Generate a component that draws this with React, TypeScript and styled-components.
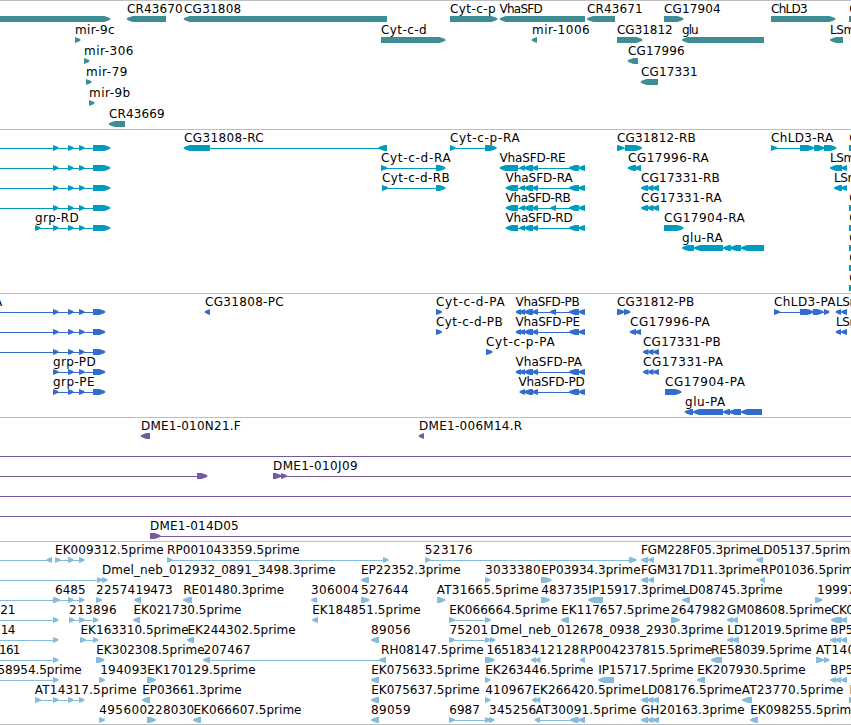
import styled, { createGlobalStyle } from "styled-components";

type Dir = "l" | "r";
type Span = [number, number];

interface Feature {
  // name, left edge and right edge of the label
  label?: [string, number, number];
  dir?: Dir;
  line?: Span;
  blocks?: Span[];
}

interface TrackData {
  name: string;
  color: string;
  rowHeight: number;
  height: number;
  rows: Feature[][];
}

const WIDTH = 851;

const GlobalStyle = createGlobalStyle`
  body {
    margin: 0;
    background-color: white;
    overflow: hidden;
  }
`;

const Browser = styled.main`
  display: flex;
  flex-direction: column;
  width: ${WIDTH}px;
  height: 725px;
  overflow: hidden;
  background-color: white;
`;

const TrackBox = styled.section<{ $height: number }>`
  display: flex;
  flex-direction: column;
  flex: none;
  box-sizing: border-box;
  height: ${(props) => props.$height}px;
  border-top: 1px solid #bebebe;
`;

const BottomLine = styled.div`
  flex: none;
  height: 1px;
  background-color: #bebebe;
`;

const Row = styled.svg<{ $height: number }>`
  display: block;
  flex: none;
  width: ${WIDTH}px;
  height: ${(props) => props.$height}px;
  overflow: visible;
`;

const Label = styled.text`
  font-family: "DejaVu Sans", "Liberation Sans", sans-serif;
  font-size: 12px;
  fill: #000;
`;

const f = (
  name: string,
  x: number,
  end: number,
  dir: Dir,
  blocks: Span[],
  line?: Span
): Feature => ({ label: [name, x, end], dir, blocks, line });

const g = (dir: Dir, blocks: Span[], line?: Span): Feature => ({
  dir,
  blocks,
  line,
});

const grpExons: Span[] = [[53, 58.5], [68, 73.5], [79, 84.5]];
const grpR = g("r", [...grpExons, [93, 110.3]], [0, 94]);
const grpP = g("r", [...grpExons, [93, 105.3]], [0, 94]);
const vhaTail: Span[] = [[519.5, 525], [524, 533], [532, 538], [569, 579], [578.5, 585]];
const threeL: Span[] = [[641, 648], [647, 653.5], [652.5, 659]];
const threeP: Span[] = [[643, 648.5], [648, 653.5], [653, 659]];
const edge = f("C", 849.7, 857, "r", [[849, 856]]);
const estStart = g("r", [[53, 58.5]], [0, 54]);
const bp: Span[] = [[830, 836], [835, 841], [841, 847]];

const tracks: TrackData[] = [
  {
    name: "genes",
    color: "#3f8d94",
    rowHeight: 21,
    height: 129,
    rows: [
      [
        g("r", [[-10, 110.3]]),
        f("CR43670", 127.5, 182.5, "l", [[126.7, 166]]),
        f("CG31808", 184.5, 241, "l", [[183.7, 387]]),
        f("Cyt-c-p", 450.5, 495.5, "r", [[450, 497.5]]),
        f("VhaSFD", 500, 542.5, "l", [[499.7, 585]]),
        f("CR43671", 587.5, 642.5, "l", [[587, 615]]),
        f("CG17904", 664.5, 720.5, "r", [[664, 683.5]]),
        f("ChLD3", 771.5, 807.5, "r", [[771, 835.5]]),
        f("C", 849.7, 857, "r", [[849, 870]]),
      ],
      [
        f("mir-9c", 75.5, 114.5, "r", [[75, 80.5]]),
        f("Cyt-c-d", 381.5, 426.5, "r", [[381, 445.5]]),
        f("mir-1006", 532.5, 589.5, "l", [[531.7, 537]]),
        f("CG31812", 617.5, 672.5, "r", [[617, 642.5]]),
        f("glu", 682.5, 698.5, "l", [[682, 764]]),
        f("LSm", 830.5, 855, "l", [[830, 843]]),
      ],
      [
        f("mir-306", 84.5, 133.3, "r", [[84, 89.5]]),
        f("CG17996", 628.5, 684.5, "l", [[627.7, 638]]),
      ],
      [
        f("mir-79", 86.5, 127.3, "r", [[86, 91.5]]),
        f("CG17331", 641.5, 697.5, "l", [[640.7, 658]]),
      ],
      [f("mir-9b", 89.5, 130, "r", [[89, 94.5]])],
      [f("CR43669", 109.5, 164.5, "l", [[108.7, 125]])],
    ],
  },
  {
    name: "transcripts",
    color: "#009cbf",
    rowHeight: 20,
    height: 164,
    rows: [
      [
        grpR,
        f("CG31808-RC", 184.5, 263.5, "l", [[183.7, 210], [378.5, 387]], [200, 387]),
        f("Cyt-c-p-RA", 450.5, 519.5, "r", [[450, 455.5], [485, 496.7]], [450, 486]),
        f("CG31812-RB", 617.5, 695.5, "r", [[617, 624], [625, 642]], [617, 630]),
        f("ChLD3-RA", 771.5, 833, "r", [[771, 777], [800, 814], [814, 824.5], [824, 836.5]], [771, 830]),
        edge,
      ],
      [
        grpR,
        f("Cyt-c-d-RA", 381.5, 450.5, "r", [[381, 387], [436, 445.5]], [381, 437]),
        f("VhaSFD-RE", 500, 565.5, "l", [[499.7, 518], ...vhaTail], [505, 585]),
        f("CG17996-RA", 628.5, 708.5, "l", [[627.7, 636], [634.5, 641]]),
        f("LSm", 830.5, 855, "l", [[830, 842], [841, 847]]),
      ],
      [
        grpR,
        f("Cyt-c-d-RB", 382.5, 449.5, "r", [[382, 388], [436, 445.5]], [382, 437]),
        f("VhaSFD-RA", 506, 572.5, "l", [[505.7, 518], ...vhaTail], [511, 585]),
        f("CG17331-RB", 641.5, 719.5, "l", threeL),
        f("LSm", 834.5, 859, "l", [[834, 842], [841, 847]]),
      ],
      [
        grpR,
        f("VhaSFD-RB", 506, 570.5, "l", [[505.7, 518], [550.5, 556], ...vhaTail], [511, 585]),
        f("CG17331-RA", 641.5, 721.5, "l", threeL),
        edge,
      ],
      [
        f("grp-RD", 35.5, 78.5, "r", [[35, 40.5], ...grpExons, [93, 110.3]], [35, 94]),
        f("VhaSFD-RD", 506, 572.5, "l", [[505.7, 518], ...vhaTail], [511, 585]),
        f("CG17904-RA", 664.5, 744.5, "r", [[664, 683.5]]),
        edge,
      ],
      [
        f("glu-RA", 682.5, 722.5, "l", [[682, 694], [694, 723], [723, 731], [730, 741], [741, 764]], [686, 760]),
        edge,
      ],
      [edge],
      [edge],
    ],
  },
  {
    name: "proteins",
    color: "#326ccc",
    rowHeight: 20,
    height: 124,
    rows: [
      [
        { label: ["A", -5.5, 1.7] },
        grpP,
        f("CG31808-PC", 205.5, 283.5, "l", [[204.7, 210]]),
        f("Cyt-c-d-PA", 436.5, 504.5, "r", [[436, 442]]),
        f("VhaSFD-PB", 516, 579.5, "l", [[515.7, 521], [550, 556], ...vhaTail], [520, 585]),
        f("CG31812-PB", 617.5, 694, "r", [[617, 624.5], [624, 630.5]]),
        f("ChLD3-PA", 774.5, 835.3, "r", [[774, 780], [800, 813.5], [813, 823.5], [824, 829.5]], [774, 826]),
        f("LSm", 836.5, 861, "l", [[835.7, 841], [841, 847]]),
      ],
      [
        grpP,
        f("Cyt-c-d-PB", 436.5, 502.5, "r", [[436, 442]]),
        f("VhaSFD-PE", 516, 580, "l", [[515.7, 521], ...vhaTail], [520, 585]),
        f("CG17996-PA", 630.5, 709.5, "l", [[629.7, 636], [635, 641]]),
        f("LSm", 836.5, 861, "l", [[835.7, 841], [841, 847]]),
      ],
      [
        grpP,
        f("Cyt-c-p-PA", 486.5, 554.5, "r", [[486, 492.5]]),
        f("CG17331-PB", 643.5, 720.5, "l", threeP),
      ],
      [
        f("grp-PD", 53.5, 95.5, "r", [...grpExons, [93, 105.3]], [53, 94]),
        f("VhaSFD-PA", 516, 581.7, "l", [[515.7, 521], ...vhaTail], [520, 585]),
        f("CG17331-PA", 643.5, 722.7, "l", threeP),
      ],
      [
        f("grp-PE", 53.5, 94.3, "r", [...grpExons, [93, 105.3]], [53, 94]),
        f("VhaSFD-PD", 519, 584.5, "l", vhaTail, [522, 585]),
        f("CG17904-PA", 665.5, 744.7, "r", [[665, 681.5]]),
      ],
      [
        f("glu-PA", 685.5, 725, "l", [[684.7, 693], [693, 723], [723, 730], [729, 741], [741, 762]], [688, 760]),
      ],
    ],
  },
  {
    name: "clones",
    color: "#7459a5",
    rowHeight: 20,
    height: 124,
    rows: [
      [
        f("DME1-010N21.F", 141.5, 240.5, "l", [[140.7, 150]]),
        f("DME1-006M14.R", 419.5, 522, "l", [[418.7, 424]]),
      ],
      [g("r", [], [0, WIDTH])],
      [
        g("r", [[197, 207.5]], [0, 198]),
        f("DME1-010J09", 273.5, 357.5, "r", [[273, 281.5], [281, 287]], [273, WIDTH]),
      ],
      [g("r", [], [0, WIDTH])],
      [g("r", [], [0, WIDTH])],
      [f("DME1-014D05", 150.5, 238.5, "r", [[150, 160.5]], [150, WIDTH])],
    ],
  },
  {
    name: "ests",
    color: "#87bbdd",
    rowHeight: 20,
    height: 183,
    rows: [
      [
        g("l", [[46.5, 52]], [0, 48]),
        f("EK009312.5prime", 55.5, 163.5, "r", [[55, 60.5], [68, 73.5], [79, 84.5]], [55, 80]),
        f("RP001043359.5prime", 167.5, 299.5, "r", [[167, 172.5], [383, 388.5]], [167, 384]),
        f("523176", 425.3, 472.5, "r", [[425, 430.5], [629, 636.5]], [425, 630]),
        f("FGM228F05.3prime", 641.5, 757.5, "l", [[641, 648], [648, 654]]),
        f("LD05137.5prime", 757, 857.5, "l", [[756, 763]]),
      ],
      [
        g("r", [[97, 102.5], [102, 107.5]], [0, 98]),
        f("Dmel_neb_012932_0891_3498.3prime", 102.5, 335.5, "r", []),
        f("EP22352.3prime", 361.5, 460.5, "l", [[361, 369]]),
        f("3033380", 485.5, 540.5, "r", [[485, 490.5]]),
        f("EP03934.3prime", 541.7, 640.5, "r", [[541, 551.5]]),
        f("FGM317D11.3prime", 641.5, 760, "l", [[641, 648], [648, 654]]),
        f("RP01036.5prime", 761, 861, "l", [[760, 765]]),
      ],
      [
        f("6485", 55.5, 85.5, "r", [[53, 60], [68, 73.5], [79, 84.5]], [0, 80]),
        f("22574", 96.5, 135, "r", [[96, 102]]),
        f("19473", 136, 172.5, "l", [[134, 141]]),
        f("RE01480.3prime", 183.7, 284, "l", [[183, 192]]),
        f("306004", 311.5, 358.5, "l", [[311, 317]]),
        f("527644", 361.5, 408.5, "r", [[361, 369.5]]),
        f("AT31665.5prime", 437.3, 538.5, "r", [[437, 445.5]]),
        f("483735", 541.7, 588, "r", [[541, 550]]),
        f("IP15917.3prime", 588.7, 683.5, "l", [[588, 603]]),
        f("LD08745.3prime", 682.7, 782.5, "l", [[682, 690]]),
        f("19997", 817.5, 855, "r", [[815, 822.5]]),
      ],
      [
        { label: ["21", 0.7, 15.3] },
        estStart,
        f("213896", 69.5, 116.5, "r", [[69, 74.5], [79, 85], [93, 98.5]], [69, 94]),
        f("EK021730.5prime", 134, 241.3, "l", [[133, 140]]),
        f("EK184851.5prime", 312.7, 420.5, "l", [[312, 318]]),
        f("EK066664.5prime", 449.7, 557.5, "r", [[449, 455], [485, 491]], [449, 486]),
        f("EK117657.5prime", 561.7, 669.5, "l", [[561, 569]]),
        f("2647982", 671.5, 725.5, "r", [[671, 680]]),
        f("GM08608.5prime", 727.5, 831.5, "l", [[727, 733], [732, 738]]),
        f("CK01", 831.5, 861, "l", [[831, 842], [841, 847]]),
      ],
      [
        { label: ["14", 1.3, 15.3] },
        estStart,
        f("EK163310.5prime", 81, 188.5, "r", [[80, 86], [93, 98.5]], [80, 94]),
        f("EK244302.5prime", 188, 295.5, "l", [[187, 194]]),
        f("89056", 371.5, 410.5, "l", [[371, 379]]),
        f("75201", 450, 488, "r", [[449, 455], [485, 490.5], [490, 495.5]], [449, 486]),
        f("Dmel_neb_012678_0938_2930.3prime", 490.7, 723.3, "r", []),
        f("LD12019.5prime", 727.7, 827.5, "l", [[727, 733], [732, 739]]),
        f("BP54", 830.7, 861, "l", bp),
      ],
      [
        { label: ["161", -0.5, 20.3] },
        estStart,
        f("EK302308.5prime", 96.7, 204.5, "r", [[96, 104.5]]),
        f("207467", 204, 250.5, "l", [[203, 210], [379, 386]], [205, 381]),
        f("RH08147.5prime", 381.5, 483.5, "l", []),
        f("165183", 487, 531, "r", [[485, 494.5]]),
        f("412128", 531.7, 579, "l", [[531, 536], [535, 540.5]]),
        f("RP004237815.5prime", 580.5, 712.3, "l", [[580, 585]]),
        f("RE58039.5prime", 711.5, 811.5, "l", [[711, 722]]),
        f("AT140", 816.5, 855, "r", [[816, 824], [824, 829.5]], [816, 828]),
      ],
      [
        { label: ["58954.5prime", -2, 81.5] },
        estStart,
        f("194093", 100.7, 147, "r", [[99, 105]]),
        f("EK170129.5prime", 147.7, 255.5, "r", [[147, 156]]),
        f("EK075633.5prime", 371.7, 479.5, "l", [[371, 379]]),
        f("EK263446.5prime", 485.7, 593.3, "r", [[485, 490.5]]),
        f("IP15717.5prime", 598.7, 693.5, "l", [[598, 614]]),
        f("EK207930.5prime", 697.7, 805.5, "l", [[697, 705]]),
        f("BP54", 830.7, 861, "l", bp),
      ],
      [
        f("AT14317.5prime", 35.3, 136.5, "r", [[35, 41], ...grpExons], [35, 80]),
        f("EP03661.3prime", 142.7, 241.5, "l", [[142, 150]]),
        f("EK075637.5prime", 371.7, 479.5, "l", [[371, 379]]),
        f("410967", 485.7, 532, "r", [[485, 490.5]]),
        f("EK266420.5prime", 533, 640.5, "l", [[532, 536.5], [535, 540.5]]),
        f("LD08176.5prime", 641.7, 741.5, "l", threeL),
        f("AT23770.5prime", 742.3, 843.3, "l", [[742, 752]]),
        f("E", 850, 856, "r", [[849, 856]]),
      ],
      [
        f("495600", 99.7, 147, "r", [[99, 105]]),
        f("228030", 147.7, 194, "r", [[147, 156]]),
        f("EK066607.5prime", 194, 301.3, "l", [[193, 201]]),
        f("89059", 371.5, 410.5, "l", [[371, 379]]),
        f("6987", 449.7, 479.7, "r", [[449, 455], [485, 490.5]], [449, 486]),
        f("345256", 489.5, 536, "r", [[489, 494.5]]),
        f("AT30091.5prime", 536, 636.3, "l", [[534.7, 540], [570, 578.5], [578, 585]], [536, 582]),
        f("GH20163.3prime", 641.5, 744.5, "l", threeL),
        f("EK098255.5prime", 750.7, 858.5, "l", [[750, 758]]),
      ],
    ],
  },
];

// a bar six pixels high with a pointed end on the side of its strand
function arrow([a, b]: Span, dir: Dir) {
  const head = Math.min(6, b - a);
  const tip = dir === "r" ? b : a;
  const tail = dir === "r" ? a : b;
  const sign = dir === "r" ? 1 : -1;
  const neck = tip - sign * head;
  const bulge = neck + sign * head * 0.6;
  return [
    `${tail},15`,
    `${neck},15`,
    `${bulge},16.2`,
    `${tip},17.4`,
    `${tip},18.4`,
    `${bulge},19.7`,
    `${neck},21`,
    `${tail},21`,
  ].join(" ");
}

function FeatureGlyph({ feature, color }: { feature: Feature; color: string }) {
  const { label, dir = "r", line, blocks = [] } = feature;

  return (
    <g>
      {line && (
        <rect x={line[0]} y={18} width={line[1] - line[0]} height={1} fill={color} />
      )}
      {blocks.map((block) => (
        <polygon key={block[0]} points={arrow(block, dir)} fill={color} />
      ))}
      {label && (
        <Label
          x={label[1] - 0.5}
          y={12}
          textLength={label[2] - label[1] + 0.7}
          lengthAdjust="spacing"
        >
          {label[0]}
        </Label>
      )}
    </g>
  );
}

function Track({ track }: { track: TrackData }) {
  return (
    <TrackBox $height={track.height}>
      {track.rows.map((row, i) => (
        <Row key={i} $height={track.rowHeight}>
          {row.map((feature, j) => (
            <FeatureGlyph key={j} feature={feature} color={track.color} />
          ))}
        </Row>
      ))}
    </TrackBox>
  );
}

function App() {
  return (
    <Browser>
      <GlobalStyle />
      {tracks.map((track) => (
        <Track key={track.name} track={track} />
      ))}
      <BottomLine />
    </Browser>
  );
}

export default App;
